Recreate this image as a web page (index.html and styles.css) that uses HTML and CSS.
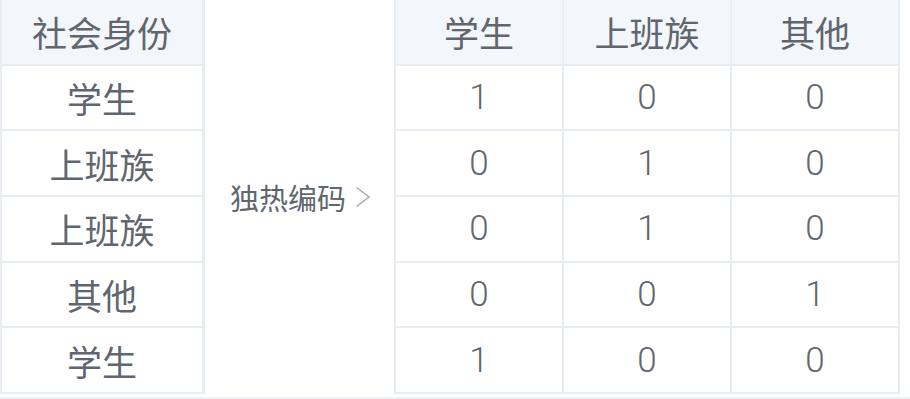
FILE: index.html
```html
<!DOCTYPE html>
<html lang="zh">
<head>
<meta charset="utf-8">
<link rel="stylesheet" href="styles.css">
</head>
<body>
<div class="wrap">
  <div class="tbl tbl-left">
    <div class="cell head">社会身份</div>
    <div class="cell">学生</div>
    <div class="cell">上班族</div>
    <div class="cell">上班族</div>
    <div class="cell">其他</div>
    <div class="cell">学生</div>
  </div>
  <div class="mid">
    <span class="mid-label">独热编码</span>
    <svg class="chev" width="16" height="22" viewBox="0 0 16 22"><path d="M1.5 1.5 L14 11 L1.5 20.5" fill="none" stroke="#a6aab0" stroke-width="1.5"/></svg>
  </div>
  <div class="tbl tbl-right">
    <div class="cell head">学生</div>
    <div class="cell head">上班族</div>
    <div class="cell head">其他</div>
    <div class="cell num">1</div><div class="cell num">0</div><div class="cell num">0</div>
    <div class="cell num">0</div><div class="cell num">1</div><div class="cell num">0</div>
    <div class="cell num">0</div><div class="cell num">1</div><div class="cell num">0</div>
    <div class="cell num">0</div><div class="cell num">0</div><div class="cell num">1</div>
    <div class="cell num">1</div><div class="cell num">0</div><div class="cell num">0</div>
  </div>
</div>
</body>
</html>
```
FILE: styles.css
```css
html, body {
  margin: 0;
  padding: 0;
  background: #ffffff;
}
body {
  width: 910px;
  height: 399px;
  overflow: hidden;
  font-family: "Noto Sans CJK SC", "Noto Sans", sans-serif;
  color: #60666f;
}
.wrap {
  display: flex;
  align-items: stretch;
  height: 394px;
  padding-bottom: 3px;
  border-bottom: 2px solid #eef1f6;
}
.tbl {
  display: grid;
  grid-template-rows: repeat(6, 1fr);
  gap: 2px;
  background: #e8edf3;
  padding: 0 2px 2px 2px;
  box-sizing: border-box;
  height: 394px;
}
.tbl-left {
  width: 205px;
  padding-right: 3px;
  grid-template-columns: 1fr;
}
.tbl-right {
  width: 506px;
  grid-template-columns: repeat(3, 1fr);
}
.cell {
  background: #ffffff;
  display: flex;
  align-items: center;
  justify-content: center;
  font-size: 35px;
  line-height: 1;
}
.cell.head {
  background: #f3f6fa;
}
.cell.num {
  font-size: 35px;
  font-weight: 300;
  font-family: "Roboto", "Liberation Sans", sans-serif;
}
.mid {
  width: 189px;
  display: flex;
  align-items: center;
  justify-content: center;
  gap: 9px;
  padding-left: 2px;
  box-sizing: border-box;
}
.mid-label {
  font-size: 29px;
  line-height: 1;
}
.chev {
  display: block;
}
```
